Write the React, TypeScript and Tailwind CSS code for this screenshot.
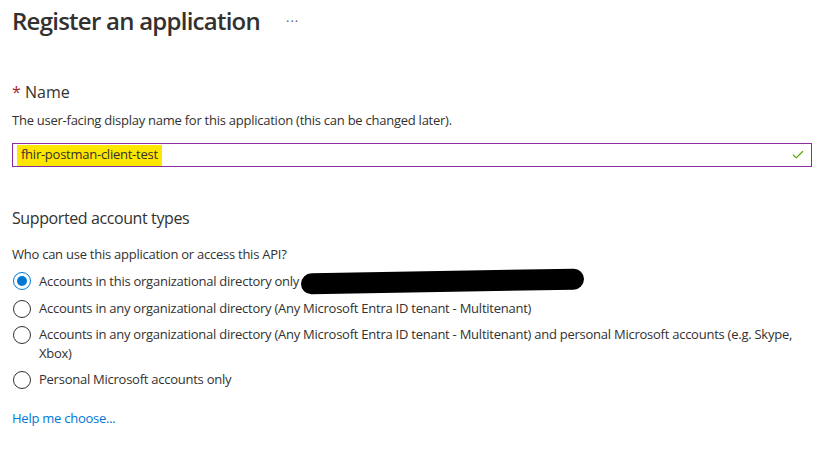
import React from "react";
import { Check } from "lucide-react";

const options = [
  { label: "Accounts in this organizational directory only", checked: true, redacted: true },
  { label: "Accounts in any organizational directory (Any Microsoft Entra ID tenant - Multitenant)" },
  {
    label:
      "Accounts in any organizational directory (Any Microsoft Entra ID tenant - Multitenant) and personal Microsoft accounts (e.g. Skype, Xbox)",
  },
  { label: "Personal Microsoft accounts only" },
];

const Radio = ({ checked }: { checked?: boolean }) => (
  <span
    className={
      checked
        ? "mt-[0.5px] flex h-[18px] w-[18px] shrink-0 items-center justify-center rounded-full border border-[#0078d4]"
        : "mt-[0.5px] flex h-[18px] w-[18px] shrink-0 items-center justify-center rounded-full border border-[#323130]"
    }
  >
    {checked && <span className="h-[10px] w-[10px] rounded-full bg-[#0078d4]" />}
  </span>
);

export default function App() {
  return (
    <div className="min-h-[454px] w-[838px] bg-white px-[12px] pt-[3px] font-['Open_Sans',sans-serif] text-[#323130]">
      {/* Header */}
      <div className="flex items-center">
        <h1 className="text-[24px] font-semibold leading-[36px] tracking-[-0.75px]">Register an application</h1>
        <span className="ml-[26px] text-[13px] leading-none tracking-[1px] text-[#605e5c]">···</span>
      </div>

      {/* Name */}
      <div className="mt-[42px] text-[16px] leading-[22px]">
        <span className="text-[#a4262c]">*</span> Name
      </div>
      <p className="mt-[8px] text-[13px] leading-[18px] tracking-[-0.25px]">
        The user-facing display name for this application (this can be changed later).
      </p>
      <div className="mt-[14px] flex h-[24px] w-[800px] items-center border border-[#8a2da5] pl-[4px] pr-[6px]">
        <span className="flex h-[21px] items-center bg-[#ffe600] px-[4px] text-[13px] tracking-[-0.25px]">
          fhir-postman-client-test
        </span>
        <Check className="ml-auto h-[14px] w-[14px] text-[#57a300]" strokeWidth={2} />
      </div>

      {/* Account types */}
      <div className="mt-[40px] text-[16px] leading-[22px] tracking-[-0.4px]">Supported account types</div>
      <p className="mt-[16px] text-[13px] leading-[18px] tracking-[-0.25px]">
        Who can use this application or access this API?
      </p>
      <div className="mt-[8px] flex w-[800px] flex-col gap-[7px]">
        {options.map((o) => (
          <div key={o.label} className="flex items-start gap-[8px] pl-[1px]">
            <Radio checked={o.checked} />
            <div className="flex items-center text-[13px] leading-[19px] tracking-[-0.25px]">
              <span>{o.label}</span>
              {o.redacted && (
                <span className="ml-[2px] h-[21px] w-[283px] -skew-y-1 rounded-full bg-black" />
              )}
            </div>
          </div>
        ))}
      </div>

      <a className="mt-[20px] block text-[13px] leading-[18px] tracking-[-0.25px] text-[#0078d4]">Help me choose...</a>
    </div>
  );
}
